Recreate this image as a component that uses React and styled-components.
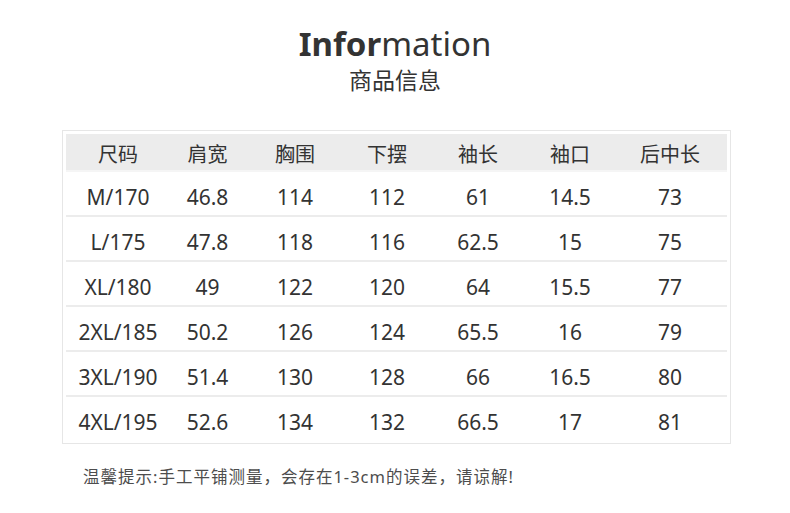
import React from "react";
import styled, { createGlobalStyle } from "styled-components";

const Global = createGlobalStyle`
  html, body { margin: 0; padding: 0; background: #fff; }
  body { font-family: "Noto Sans", "Noto Sans CJK SC", sans-serif; color: #333; }
`;

const Page = styled.div`
  width: 790px;
  height: 513px;
  display: flex;
  flex-direction: column;
  align-items: center;
  overflow: hidden;
`;

const Title = styled.h1`
  margin: 24px 0 0;
  font-family: "Noto Sans", sans-serif;
  font-size: 33px;
  line-height: 40px;
  font-weight: 400;
  color: #333;
  b { font-weight: 700; }
`;

const Subtitle = styled.div`
  font-family: "Noto Sans CJK SC", sans-serif;
  font-size: 23px;
  line-height: 30px;
  color: #333;
`;

const Table = styled.div`
  margin-top: 36px;
  align-self: flex-start;
  margin-left: 62px;
  border: 1px solid #e6e6e6;
  padding: 3px;
  display: flex;
  flex-direction: column;
`;

const cols = "104px 75px 100px 84px 98px 86px 114px";

const HeadRow = styled.div`
  display: grid;
  grid-template-columns: ${cols};
  height: 36px;
  align-items: center;
  background: #ececec;
`;

const Row = styled.div`
  display: grid;
  grid-template-columns: ${cols};
  height: 43px;
  align-items: center;
  border-top: 2px solid ${(p) => (p.$first ? "#f5f5f5" : "#ececec")};
`;

const Cell = styled.div`
  text-align: center;
  font-family: ${(p) =>
    p.$head ? `"Noto Sans CJK SC", sans-serif` : `"Noto Sans", sans-serif`};
  font-size: ${(p) => (p.$head ? "20px" : "21px")};
  color: #333;
  line-height: 1;
  padding-top: ${(p) => (p.$head ? "3px" : "7px")};
`;

const Note = styled.div`
  margin-top: 21px;
  align-self: flex-start;
  margin-left: 83px;
  font-family: "Noto Sans", "Noto Sans CJK SC", sans-serif;
  font-size: 16.5px;
  letter-spacing: 1px;
  line-height: 24px;
  color: #4d4d4d;
`;

const head = ["尺码", "肩宽", "胸围", "下摆", "袖长", "袖口", "后中长"];
const rows = [
  ["M/170", "46.8", "114", "112", "61", "14.5", "73"],
  ["L/175", "47.8", "118", "116", "62.5", "15", "75"],
  ["XL/180", "49", "122", "120", "64", "15.5", "77"],
  ["2XL/185", "50.2", "126", "124", "65.5", "16", "79"],
  ["3XL/190", "51.4", "130", "128", "66", "16.5", "80"],
  ["4XL/195", "52.6", "134", "132", "66.5", "17", "81"],
];

export default function App() {
  return (
    <Page>
      <Global />
      <Title>
        <b>Infor</b>mation
      </Title>
      <Subtitle>商品信息</Subtitle>
      <Table>
        <HeadRow>
          {head.map((h) => (
            <Cell key={h} $head>
              {h}
            </Cell>
          ))}
        </HeadRow>
        {rows.map((r, i) => (
          <Row key={r[0]} $first={i === 0}>
            {r.map((c, j) => (
              <Cell key={j}>{c}</Cell>
            ))}
          </Row>
        ))}
      </Table>
      <Note>温馨提示:手工平铺测量，会存在1-3cm的误差，请谅解!</Note>
    </Page>
  );
}
